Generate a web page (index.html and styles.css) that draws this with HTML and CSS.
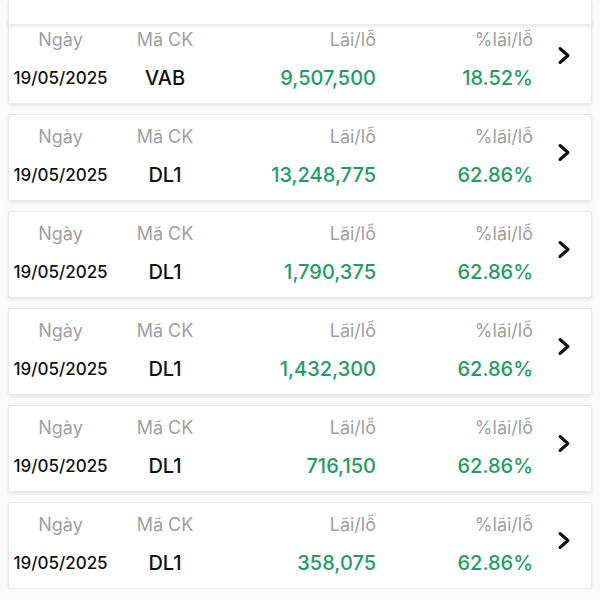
FILE: index.html
```html
<!DOCTYPE html>
<html lang="vi">
<head>
  <meta charset="UTF-8">
  <title>Lãi/lỗ đã thực hiện</title>
  <link rel="stylesheet" href="styles.css">
</head>
<body>

  <div class="top-card"></div>

  <div class="list">
    <div class="card">
      <div class="col center">
        <div class="label">Ngày</div>
        <div class="date">19/05/2025</div>
      </div>
      <div class="col center">
        <div class="label">Mã CK</div>
        <div class="code">VAB</div>
      </div>
      <div class="col right">
        <div class="label">Lãi/lỗ</div>
        <div class="value">9,507,500</div>
      </div>
      <div class="col right">
        <div class="label">%lãi/lỗ</div>
        <div class="value">18.52%</div>
      </div>
      <div class="arrow">
        <svg width="14" height="19" viewBox="0 0 14 19"><polyline points="3,2.5 11,9.5 3,16.5" fill="none" stroke="#111" stroke-width="3" stroke-linecap="round" stroke-linejoin="round"/></svg>
      </div>
    </div>

    <div class="card">
      <div class="col center">
        <div class="label">Ngày</div>
        <div class="date">19/05/2025</div>
      </div>
      <div class="col center">
        <div class="label">Mã CK</div>
        <div class="code">DL1</div>
      </div>
      <div class="col right">
        <div class="label">Lãi/lỗ</div>
        <div class="value">13,248,775</div>
      </div>
      <div class="col right">
        <div class="label">%lãi/lỗ</div>
        <div class="value">62.86%</div>
      </div>
      <div class="arrow">
        <svg width="14" height="19" viewBox="0 0 14 19"><polyline points="3,2.5 11,9.5 3,16.5" fill="none" stroke="#111" stroke-width="3" stroke-linecap="round" stroke-linejoin="round"/></svg>
      </div>
    </div>

    <div class="card">
      <div class="col center">
        <div class="label">Ngày</div>
        <div class="date">19/05/2025</div>
      </div>
      <div class="col center">
        <div class="label">Mã CK</div>
        <div class="code">DL1</div>
      </div>
      <div class="col right">
        <div class="label">Lãi/lỗ</div>
        <div class="value">1,790,375</div>
      </div>
      <div class="col right">
        <div class="label">%lãi/lỗ</div>
        <div class="value">62.86%</div>
      </div>
      <div class="arrow">
        <svg width="14" height="19" viewBox="0 0 14 19"><polyline points="3,2.5 11,9.5 3,16.5" fill="none" stroke="#111" stroke-width="3" stroke-linecap="round" stroke-linejoin="round"/></svg>
      </div>
    </div>

    <div class="card">
      <div class="col center">
        <div class="label">Ngày</div>
        <div class="date">19/05/2025</div>
      </div>
      <div class="col center">
        <div class="label">Mã CK</div>
        <div class="code">DL1</div>
      </div>
      <div class="col right">
        <div class="label">Lãi/lỗ</div>
        <div class="value">1,432,300</div>
      </div>
      <div class="col right">
        <div class="label">%lãi/lỗ</div>
        <div class="value">62.86%</div>
      </div>
      <div class="arrow">
        <svg width="14" height="19" viewBox="0 0 14 19"><polyline points="3,2.5 11,9.5 3,16.5" fill="none" stroke="#111" stroke-width="3" stroke-linecap="round" stroke-linejoin="round"/></svg>
      </div>
    </div>

    <div class="card">
      <div class="col center">
        <div class="label">Ngày</div>
        <div class="date">19/05/2025</div>
      </div>
      <div class="col center">
        <div class="label">Mã CK</div>
        <div class="code">DL1</div>
      </div>
      <div class="col right">
        <div class="label">Lãi/lỗ</div>
        <div class="value">716,150</div>
      </div>
      <div class="col right">
        <div class="label">%lãi/lỗ</div>
        <div class="value">62.86%</div>
      </div>
      <div class="arrow">
        <svg width="14" height="19" viewBox="0 0 14 19"><polyline points="3,2.5 11,9.5 3,16.5" fill="none" stroke="#111" stroke-width="3" stroke-linecap="round" stroke-linejoin="round"/></svg>
      </div>
    </div>

    <div class="card">
      <div class="col center">
        <div class="label">Ngày</div>
        <div class="date">19/05/2025</div>
      </div>
      <div class="col center">
        <div class="label">Mã CK</div>
        <div class="code">DL1</div>
      </div>
      <div class="col right">
        <div class="label">Lãi/lỗ</div>
        <div class="value">358,075</div>
      </div>
      <div class="col right">
        <div class="label">%lãi/lỗ</div>
        <div class="value">62.86%</div>
      </div>
      <div class="arrow">
        <svg width="14" height="19" viewBox="0 0 14 19"><polyline points="3,2.5 11,9.5 3,16.5" fill="none" stroke="#111" stroke-width="3" stroke-linecap="round" stroke-linejoin="round"/></svg>
      </div>
    </div>
  </div>

</body>
</html>
```

FILE: styles.css
```css
body {
  margin: 0;
  font-family: Inter, "Noto Sans", sans-serif;
  background-color: #fafafa;
  color: #111;
  overflow: hidden;
}

.top-card {
  position: relative;
  z-index: 1;
  height: 24px;
  margin: 0 8px;
  background: #fff;
  border: 1px solid #ececec;
  border-top: none;
  box-shadow: 0 2px 3px rgba(0, 0, 0, 0.08);
}

.list {
  display: flex;
  flex-direction: column;
  gap: 10px;
  margin: -8px 8px 0;
}

.card {
  display: grid;
  grid-template-columns: 103px 106px 158px 157px 1fr;
  align-items: center;
  box-sizing: border-box;
  height: 87px;
  padding: 10px 0 12px;
  background: #fff;
  border: 1px solid #e9e9e9;
  border-radius: 2px;
  box-shadow: 0 2px 3px rgba(0, 0, 0, 0.07);
}

.col {
  display: flex;
  flex-direction: column;
  gap: 15px;
}
.center { align-items: center; }
.right { align-items: flex-end; }

.label {
  font-size: 18px;
  line-height: 22px;
  color: #a0a0a0;
}
.date {
  font-size: 17px;
  line-height: 24px;
  font-weight: 500;
}
.code {
  font-size: 20px;
  line-height: 24px;
  font-weight: 500;
}
.value {
  font-size: 20px;
  line-height: 24px;
  font-weight: 500;
  color: #1f9d63;
}

.arrow {
  display: flex;
  padding-left: 24px;
  margin-bottom: 8px;
}
```
